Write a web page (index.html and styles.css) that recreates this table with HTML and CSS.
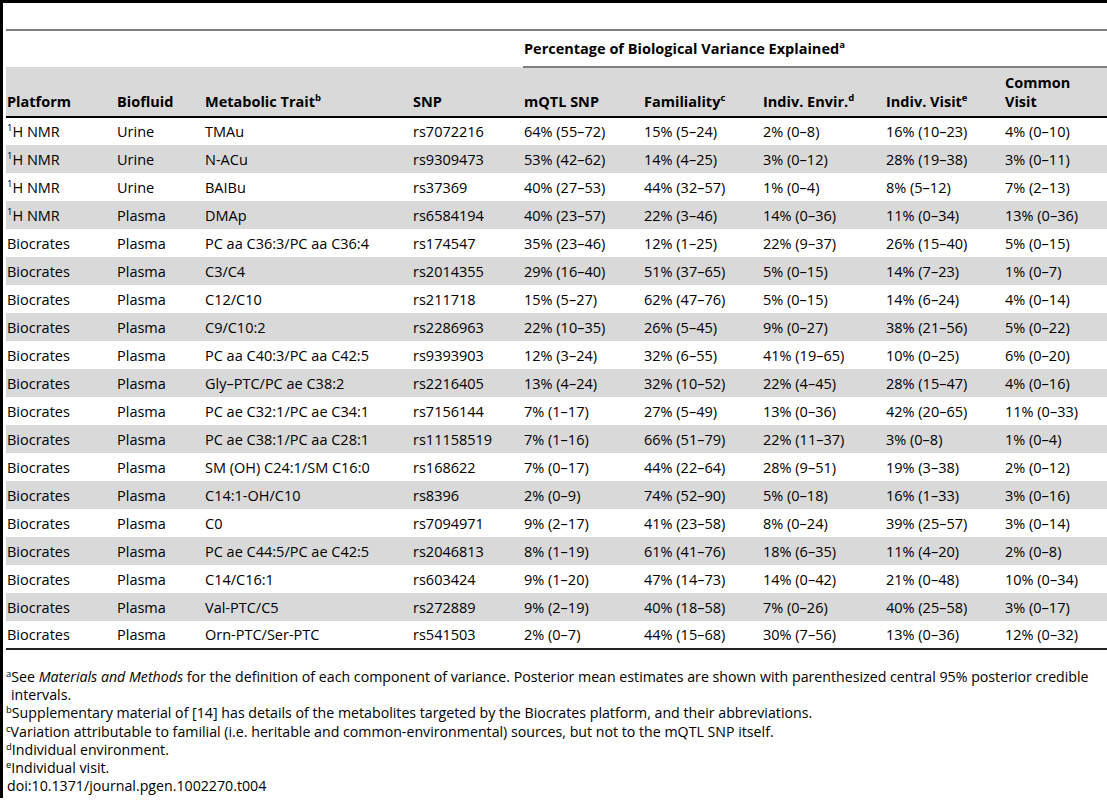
FILE: index.html
```html
<!DOCTYPE html>
<html>

<head>
    <meta charset="utf-8">
    <title>Table 4. Variance explained by mQTL SNPs</title>
    <link rel="stylesheet" href="styles.css">
</head>

<body>

    <div class="frame">
        <table class="vt">
            <colgroup>
                <col class="c-platform">
                <col class="c-fluid">
                <col class="c-trait">
                <col class="c-snp">
                <col class="c-pct">
                <col class="c-fam">
                <col class="c-env">
                <col class="c-visit">
                <col class="c-common">
            </colgroup>
            <thead>
                <tr class="cap"><th colspan="9"></th></tr>
                <tr class="group">
                    <th colspan="4"></th>
                    <th colspan="5" class="span">Percentage of Biological Variance Explained<sup>a</sup></th>
                </tr>
                <tr class="heads">
                    <th>Platform</th>
                    <th>Biofluid</th>
                    <th>Metabolic Trait<sup>b</sup></th>
                    <th>SNP</th>
                    <th>mQTL SNP</th>
                    <th>Familiality<sup>c</sup></th>
                    <th>Indiv. Envir.<sup>d</sup></th>
                    <th>Indiv. Visit<sup>e</sup></th>
                    <th>Common<br>Visit</th>
                </tr>
            </thead>
            <tbody>
                <tr><td><sup>1</sup>H NMR</td><td>Urine</td><td>TMAu</td><td>rs7072216</td><td>64% (55–72)</td><td>15% (5–24)</td><td>2% (0–8)</td><td>16% (10–23)</td><td>4% (0–10)</td></tr>
                <tr><td><sup>1</sup>H NMR</td><td>Urine</td><td>N-ACu</td><td>rs9309473</td><td>53% (42–62)</td><td>14% (4–25)</td><td>3% (0–12)</td><td>28% (19–38)</td><td>3% (0–11)</td></tr>
                <tr><td><sup>1</sup>H NMR</td><td>Urine</td><td>BAIBu</td><td>rs37369</td><td>40% (27–53)</td><td>44% (32–57)</td><td>1% (0–4)</td><td>8% (5–12)</td><td>7% (2–13)</td></tr>
                <tr><td><sup>1</sup>H NMR</td><td>Plasma</td><td>DMAp</td><td>rs6584194</td><td>40% (23–57)</td><td>22% (3–46)</td><td>14% (0–36)</td><td>11% (0–34)</td><td>13% (0–36)</td></tr>
                <tr><td>Biocrates</td><td>Plasma</td><td>PC aa C36:3/PC aa C36:4</td><td>rs174547</td><td>35% (23–46)</td><td>12% (1–25)</td><td>22% (9–37)</td><td>26% (15–40)</td><td>5% (0–15)</td></tr>
                <tr><td>Biocrates</td><td>Plasma</td><td>C3/C4</td><td>rs2014355</td><td>29% (16–40)</td><td>51% (37–65)</td><td>5% (0–15)</td><td>14% (7–23)</td><td>1% (0–7)</td></tr>
                <tr><td>Biocrates</td><td>Plasma</td><td>C12/C10</td><td>rs211718</td><td>15% (5–27)</td><td>62% (47–76)</td><td>5% (0–15)</td><td>14% (6–24)</td><td>4% (0–14)</td></tr>
                <tr><td>Biocrates</td><td>Plasma</td><td>C9/C10:2</td><td>rs2286963</td><td>22% (10–35)</td><td>26% (5–45)</td><td>9% (0–27)</td><td>38% (21–56)</td><td>5% (0–22)</td></tr>
                <tr><td>Biocrates</td><td>Plasma</td><td>PC aa C40:3/PC aa C42:5</td><td>rs9393903</td><td>12% (3–24)</td><td>32% (6–55)</td><td>41% (19–65)</td><td>10% (0–25)</td><td>6% (0–20)</td></tr>
                <tr><td>Biocrates</td><td>Plasma</td><td>Gly–PTC/PC ae C38:2</td><td>rs2216405</td><td>13% (4–24)</td><td>32% (10–52)</td><td>22% (4–45)</td><td>28% (15–47)</td><td>4% (0–16)</td></tr>
                <tr><td>Biocrates</td><td>Plasma</td><td>PC ae C32:1/PC ae C34:1</td><td>rs7156144</td><td>7% (1–17)</td><td>27% (5–49)</td><td>13% (0–36)</td><td>42% (20–65)</td><td>11% (0–33)</td></tr>
                <tr><td>Biocrates</td><td>Plasma</td><td>PC ae C38:1/PC aa C28:1</td><td>rs11158519</td><td>7% (1–16)</td><td>66% (51–79)</td><td>22% (11–37)</td><td>3% (0–8)</td><td>1% (0–4)</td></tr>
                <tr><td>Biocrates</td><td>Plasma</td><td>SM (OH) C24:1/SM C16:0</td><td>rs168622</td><td>7% (0–17)</td><td>44% (22–64)</td><td>28% (9–51)</td><td>19% (3–38)</td><td>2% (0–12)</td></tr>
                <tr><td>Biocrates</td><td>Plasma</td><td>C14:1-OH/C10</td><td>rs8396</td><td>2% (0–9)</td><td>74% (52–90)</td><td>5% (0–18)</td><td>16% (1–33)</td><td>3% (0–16)</td></tr>
                <tr><td>Biocrates</td><td>Plasma</td><td>C0</td><td>rs7094971</td><td>9% (2–17)</td><td>41% (23–58)</td><td>8% (0–24)</td><td>39% (25–57)</td><td>3% (0–14)</td></tr>
                <tr><td>Biocrates</td><td>Plasma</td><td>PC ae C44:5/PC ae C42:5</td><td>rs2046813</td><td>8% (1–19)</td><td>61% (41–76)</td><td>18% (6–35)</td><td>11% (4–20)</td><td>2% (0–8)</td></tr>
                <tr><td>Biocrates</td><td>Plasma</td><td>C14/C16:1</td><td>rs603424</td><td>9% (1–20)</td><td>47% (14–73)</td><td>14% (0–42)</td><td>21% (0–48)</td><td>10% (0–34)</td></tr>
                <tr><td>Biocrates</td><td>Plasma</td><td>Val-PTC/C5</td><td>rs272889</td><td>9% (2–19)</td><td>40% (18–58)</td><td>7% (0–26)</td><td>40% (25–58)</td><td>3% (0–17)</td></tr>
                <tr><td>Biocrates</td><td>Plasma</td><td>Orn-PTC/Ser-PTC</td><td>rs541503</td><td>2% (0–7)</td><td>44% (15–68)</td><td>30% (7–56)</td><td>13% (0–36)</td><td>12% (0–32)</td></tr>
            </tbody>
        </table>

        <div class="notes">
            <p><sup>a</sup>See <em>Materials and Methods</em> for the definition of each component of variance. Posterior mean estimates are shown with parenthesized central 95% posterior credible intervals.</p>
            <p><sup>b</sup>Supplementary material of [14] has details of the metabolites targeted by the Biocrates platform, and their abbreviations.</p>
            <p><sup>c</sup>Variation attributable to familial (i.e. heritable and common-environmental) sources, but not to the mQTL SNP itself.</p>
            <p><sup>d</sup>Individual environment.</p>
            <p><sup>e</sup>Individual visit.</p>
            <p class="doi">doi:10.1371/journal.pgen.1002270.t004</p>
        </div>
    </div>

</body>

</html>
```

FILE: styles.css
```css
/* General styles */

html {
    background-color: white;
    font-family: "Open Sans", "Liberation Sans", sans-serif;
    color: #000;
}

body {
    margin: 0;
}

* {
    box-sizing: border-box;
}

/* Outer frame: black rule on top and down the left side */

.frame {
    height: 798px;
    border-top: 3px solid #000;
    border-left: 3px solid #000;
    padding-left: 3px;
    overflow: hidden;
}

/* Table */

.vt {
    width: 1101px;
    border-collapse: collapse;
    table-layout: fixed;
    font-size: 14.5px;
}

.c-platform { width: 110px; }
.c-fluid { width: 88px; }
.c-trait { width: 208px; }
.c-snp { width: 111px; }
.c-pct { width: 120px; }
.c-fam { width: 119px; }
.c-env { width: 123px; }
.c-visit { width: 119px; }
.c-common { width: 103px; }

.vt th,
.vt td {
    padding: 0 0 0 1px;
    text-align: left;
    white-space: nowrap;
}

.vt sup {
    font-size: 9.5px;
    line-height: 0;
    vertical-align: 6px;
}

.cap th {
    height: 27px;
    border-bottom: 2px solid #808080;
}

.group th {
    height: 37px;
    font-weight: bold;
}

.group .span {
    border-bottom: 2px solid #808080;
}

.heads th {
    height: 50px;
    background-color: #d9d9d9;
    vertical-align: bottom;
    padding-bottom: 5px;
    line-height: 19px;
    border-bottom: 2px solid #000;
}

.vt tbody td {
    height: 28px;
}

.vt tbody tr:nth-child(even) td {
    background-color: #d9d9d9;
}

.vt tbody tr:last-child td {
    border-bottom: 2px solid #222;
}

/* Footnotes */

.notes {
    width: 1104px;
    padding-top: 18px;
    font-size: 14.2px;
    line-height: 18.2px;
}

.notes p {
    margin: 0;
    padding-left: 5px;
    text-indent: -5px;
}

.notes sup {
    font-size: 9.5px;
    line-height: 0;
    vertical-align: 5px;
}

.notes .doi {
    padding-left: 1px;
    text-indent: 0;
}
```
